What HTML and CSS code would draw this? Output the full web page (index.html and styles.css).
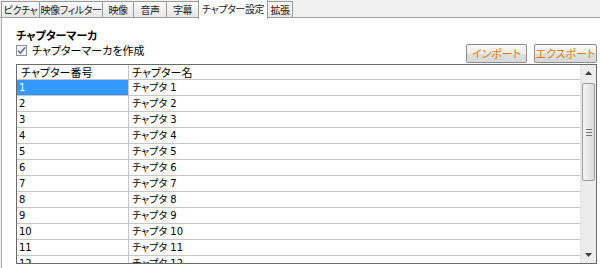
FILE: index.html
```html
<!DOCTYPE html>
<html lang="ja">
<head>
  <meta charset="UTF-8">
  <title>チャプター設定</title>
  <link rel="stylesheet" href="styles.css">
</head>
<body>
  <div class="tabs">
    <div class="tab tab-picture">ピクチャ</div>
    <div class="tab tab-filter">映像フィルター</div>
    <div class="tab tab-video">映像</div>
    <div class="tab tab-audio">音声</div>
    <div class="tab tab-subs">字幕</div>
    <div class="tab tab-chapter active">チャプター設定</div>
    <div class="tab tab-ext">拡張</div>
  </div>

  <div class="panel">
    <div class="group-title">チャプターマーカ</div>

    <div class="toolbar">
      <label class="check">
        <span class="checkbox">
          <svg width="9" height="9" viewBox="0 0 9 9"><path d="M1 4.5 L3.5 7 L8 1.5" fill="none" stroke="#5a6f93" stroke-width="1.6"/></svg>
        </span>
        チャプターマーカを作成
      </label>
      <div class="actions">
        <button class="btn btn-import">インポート</button>
        <button class="btn btn-export">エクスポート</button>
      </div>
    </div>

    <div class="grid">
      <div class="grid-body">
        <div class="row head">
          <div class="cell num">チャプター番号</div>
          <div class="cell name">チャプター名</div>
        </div>
        <div class="row"><div class="cell num selected">1</div><div class="cell name">チャプタ 1</div></div>
        <div class="row"><div class="cell num">2</div><div class="cell name">チャプタ 2</div></div>
        <div class="row"><div class="cell num">3</div><div class="cell name">チャプタ 3</div></div>
        <div class="row"><div class="cell num">4</div><div class="cell name">チャプタ 4</div></div>
        <div class="row"><div class="cell num">5</div><div class="cell name">チャプタ 5</div></div>
        <div class="row"><div class="cell num">6</div><div class="cell name">チャプタ 6</div></div>
        <div class="row"><div class="cell num">7</div><div class="cell name">チャプタ 7</div></div>
        <div class="row"><div class="cell num">8</div><div class="cell name">チャプタ 8</div></div>
        <div class="row"><div class="cell num">9</div><div class="cell name">チャプタ 9</div></div>
        <div class="row"><div class="cell num">10</div><div class="cell name">チャプタ 10</div></div>
        <div class="row"><div class="cell num">11</div><div class="cell name">チャプタ 11</div></div>
        <div class="row"><div class="cell num">12</div><div class="cell name">チャプタ 12</div></div>
      </div>
      <div class="scrollbar">
        <div class="sb-btn"><svg width="7" height="4" viewBox="0 0 7 4"><path d="M0 4 L3.5 0 L7 4 Z" fill="#404040"/></svg></div>
        <div class="sb-track">
          <div class="sb-thumb"><span class="grip"></span></div>
        </div>
        <div class="sb-btn"><svg width="7" height="4" viewBox="0 0 7 4"><path d="M0 0 L3.5 4 L7 0 Z" fill="#404040"/></svg></div>
      </div>
    </div>
  </div>
</body>
</html>
```

FILE: styles.css
```css
/* === Base === */
html,body{margin:0;height:100%}
body{
  background:#f0f0f0;
  font-family:"Noto Sans CJK JP","DejaVu Sans",sans-serif;
  font-size:11px;
  font-feature-settings:"palt";
  color:#000;
  overflow:hidden;
}

/* === Tab strip === */
.tabs{display:flex;align-items:flex-end;height:18px;padding-left:1px;border-bottom:1px solid #a0a0a0;box-sizing:border-box}
.tab{
  height:16px;line-height:15px;padding:0;text-align:center;overflow:hidden;
  font-size:10px;letter-spacing:-0.4px;
  border:1px solid #9a9a9a;border-bottom:none;margin-right:-1px;
  background:linear-gradient(#fafafa,#e6e6e6);
  box-sizing:border-box;white-space:nowrap;color:#222;
}
.tab.active{height:20px;line-height:18px;margin-bottom:-2px;background:#fff;position:relative;z-index:1}
.tab-picture{width:39px}
.tab-filter{width:64px}
.tab-video{width:32px}
.tab-audio{width:34px}
.tab-subs{width:33px}
.tab-chapter{width:70px}
.tab-ext{width:26px}

/* === Panel === */
.panel{background:#fff;margin-left:1px;border-left:1px solid #b0b0b0;height:100%;padding:10px 3px 0 14px;box-sizing:border-box}
.group-title{font-weight:700;line-height:14px;height:14px}

.toolbar{display:flex;justify-content:space-between;align-items:flex-start;height:22px}
.check{display:flex;align-items:center;gap:5px;margin-top:2px;line-height:12px}
.checkbox{width:9px;height:9px;border:1px solid #8f8f8f;background:linear-gradient(#f2f2f2,#fff);display:flex;align-items:center;justify-content:center}

.actions{display:flex;gap:7px;margin-top:2px}
.btn{
  height:19px;padding:0;border:1px solid #8c8c8c;border-radius:2px;
  background:linear-gradient(#fbfbfb,#ececec 50%,#dedede 51%,#d8d8d8);
  color:#dd7d0a;font:inherit;font-size:11px;line-height:17px;
}
.btn-import{width:61px}
.btn-export{width:63px}

/* === Grid === */
.grid{display:flex;height:200px;border:1px solid #6a6a6a;box-sizing:border-box}
.grid-body{flex:1;overflow:hidden}
.row{display:flex;height:16px;border-bottom:1px solid #c5c5c5;box-sizing:border-box}
.cell{line-height:15px;white-space:nowrap;font-family:"DejaVu Sans","Noto Sans CJK JP",sans-serif;font-size:10px}
.cell.num{width:112px;border-right:1px solid #c5c5c5;padding-left:2px;box-sizing:border-box}
.cell.name{padding-left:3px}
.row.head{height:15px}
.row.head .cell{font-family:"Noto Sans CJK JP",sans-serif;font-size:11px;line-height:14px}
.row.head .num{padding-left:4px}
.cell.selected{background:#3399ff;color:#fff}

/* === Scrollbar === */
.scrollbar{width:15px;display:flex;flex-direction:column;background:#ececec;border-left:1px solid #e2e2e2}
.sb-btn{height:16px;display:flex;align-items:center;justify-content:center}
.sb-track{flex:1;padding-top:2px}
.sb-thumb{
  height:96px;margin:0 1px;border:1px solid #9b9b9b;border-radius:2px;
  background:linear-gradient(90deg,#f4f4f4,#dcdcdc);
  display:flex;align-items:center;justify-content:center;
}
.grip{width:6px;height:5px;border-top:1px solid #777;border-bottom:1px solid #777;position:relative}
.grip::after{content:"";position:absolute;left:0;right:0;top:2px;border-top:1px solid #777}
```
